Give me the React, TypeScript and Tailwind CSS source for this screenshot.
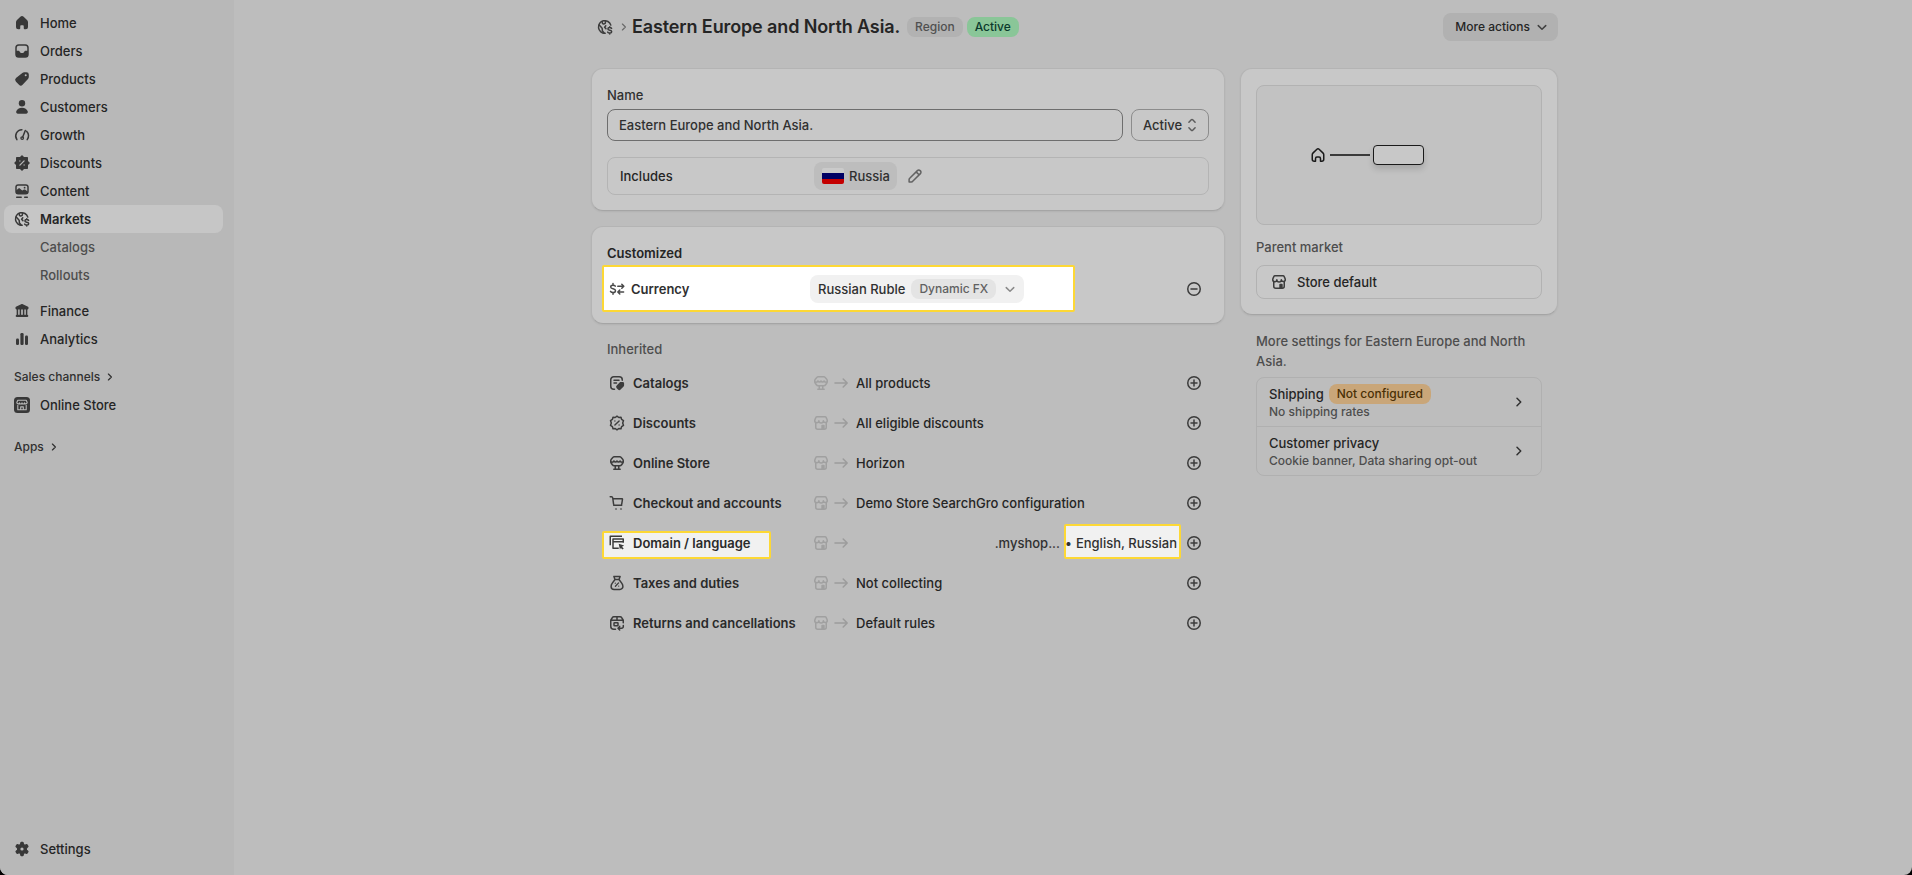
import React from 'react';

interface IconProps {
  className?: string;
  small?: boolean;
}

interface SvgProps extends IconProps {
  children: React.ReactNode;
}

const Svg: React.FC<SvgProps> = ({ className = '', small, children }) => (
  <svg
    viewBox="0 0 20 20"
    className={`${small ? 'w-4 h-4' : 'w-5 h-5'} shrink-0 ${className}`}
    fill="none"
    stroke="currentColor"
    strokeWidth={1.5}
    strokeLinecap="round"
    strokeLinejoin="round"
  >
    {children}
  </svg>
);

const HomeIcon: React.FC<IconProps> = (props) => (
  <Svg {...props}>
    <path
      fill="currentColor"
      stroke="none"
      d="M8.35 3.7a2.4 2.4 0 0 1 3.3 0l3.35 3.2c.65.6 1 1.45 1 2.3v4.5a2.5 2.5 0 0 1-2.5 2.5h-.75a1 1 0 0 1-1-1v-1.7c0-.8-.4-1.3-1-1.3h-1.5c-.6 0-1 .5-1 1.3v1.7a1 1 0 0 1-1 1H6.5A2.5 2.5 0 0 1 4 13.7V9.2c0-.85.35-1.7 1-2.3z"
    />
  </Svg>
);

const OrdersIcon: React.FC<IconProps> = (props) => (
  <Svg {...props}>
    <rect x="4" y="4" width="12" height="12" rx="2.75" />
    <path
      fill="currentColor"
      stroke="none"
      d="M4 9.75h2.6c.5 0 .8.3 1 .7l.3.6c.3.6.8.9 1.4.9h1.4c.6 0 1.1-.3 1.4-.9l.3-.6c.2-.4.5-.7 1-.7H16v3.5A2.75 2.75 0 0 1 13.25 16h-6.5A2.75 2.75 0 0 1 4 13.25z"
    />
  </Svg>
);

const ProductsIcon: React.FC<IconProps> = (props) => (
  <Svg {...props}>
    <path
      fill="currentColor"
      stroke="none"
      fillRule="evenodd"
      d="M10.3 3.9c.6-.5 1.2-.7 2-.7h2.200A2.3 2.3 0 0 1 16.8 5.5v2.3c0 .8-.3 1.5-.8 2.1l-5.4 5.8a2.5 2.5 0 0 1-3.6 0l-3-3a2.5 2.5 0 0 1 0-3.6zM13.7 7.300a1 1 0 1 0 0-2 1 1 0 0 0 0 2"
    />
  </Svg>
);

const CustomersIcon: React.FC<IconProps> = (props) => (
  <Svg {...props}>
    <g fill="currentColor" stroke="none">
      <circle cx="10" cy="6.2" r="3.2" />
      <path d="M4.2 14.6c.7-2.3 3-3.8 5.8-3.8s5.1 1.5 5.8 3.8c.3 1.2-.5 2.2-1.7 2.2H5.900c-1.2 0-2-1-1.700-2.200" />
    </g>
  </Svg>
);

const GrowthIcon: React.FC<IconProps> = (props) => (
  <Svg {...props}>
    <path d="M4.900 14.600A6.250 6.250 0 0 1 9.900 4.700M14.600 6.200a6.250 6.250 0 0 1 .6 8.400" />
    <path d="M13.300 5.500 10.700 12" />
    <circle cx="10.2" cy="13.1" r="1.3" strokeWidth={1.3} />
  </Svg>
);

const DiscountSolidIcon: React.FC<IconProps> = (props) => (
  <Svg {...props}>
    <path
      fill="currentColor"
      strokeWidth={1.6}
      d="M10 3.2l1.700 1.600h3.500v3.500L17 10l-1.800 1.700v3.500h-3.500L10 16.900l-1.700-1.700H4.800v-3.500L3.100 10l1.700-1.700V4.800h3.500z"
    />
    <path stroke="#b8b8b8" strokeWidth={1.3} d="M12.100 7.900 7.900 12.100M7.900 8v.01M12.100 12v.01" />
  </Svg>
);

const ContentIcon: React.FC<IconProps> = (props) => (
  <Svg {...props}>
    <rect x="4" y="3.9" width="12" height="8.9" rx="2.2" />
    <path
      fill="currentColor"
      stroke="none"
      d="M4 9.600l2.200-1.900c.6-.5 1.300-.5 1.900 0l1.500 1.400c.4.400 1 .400 1.500 0l.5-.4c.5-.4 1.200-.4 1.700 0L16 10.800v.5a1.700 1.700 0 0 1-1.700 1.700H5.700A1.700 1.700 0 0 1 4 11.300z"
    />
    <circle cx="12.6" cy="6.7" r=".9" fill="currentColor" stroke="none" />
    <path d="M4.700 16.300h4.500M12.700 16.300h2.600" />
  </Svg>
);

const MarketsIcon: React.FC<IconProps> = (props) => (
  <Svg {...props}>
    <path d="M10.200 16.250A6.300 6.300 0 1 1 15.800 8.100" />
    <path d="M4.200 8.100l2.300 2.400c.5.500.8.900.8 1.600v1.200c0 .8.500 1.200 1.200 1.800l.6 1" />
    <path d="M7.300 4.500v1.300c0 .8.600 1.200 1.300 1.100l.9-.1c.6 0 .9-.5.9-1V4.100" />
    <path d="M16.600 11.400c-.4-.6-1-.8-1.900-.8-1.100 0-1.800.5-1.800 1.300 0 1.900 3.800.9 3.800 2.800 0 .8-.8 1.400-1.900 1.400-1 0-1.700-.3-2.100-1M14.750 9.700v.8M14.750 16.200v.8" />
    <path d="M10.800 8.800 9.600 10.300l1.300 1.300" />
  </Svg>
);

const FinanceIcon: React.FC<IconProps> = (props) => (
  <Svg {...props}>
    <path
      fill="currentColor"
      stroke="none"
      d="M9.200 3.300c.5-.3 1.100-.3 1.600 0l4.800 2.200c.6.300 1 .8 1 1.500 0 .9-.7 1.500-1.500 1.500H4.900c-.8 0-1.500-.6-1.500-1.500 0-.7.4-1.200 1-1.500z"
    />
    <path d="M5.400 8.500v5M8.400 8.500v5M11.600 8.500v5M14.600 8.500v5" />
    <path strokeWidth={2.2} d="M4.800 14.900h10.400" />
  </Svg>
);

const AnalyticsIcon: React.FC<IconProps> = (props) => (
  <Svg {...props}>
    <g fill="currentColor" stroke="none">
      <rect x="4" y="9.5" width="3" height="6.5" rx="1.2" />
      <rect x="8.4" y="4" width="3.2" height="12" rx="1.2" />
      <rect x="13" y="6.5" width="3" height="9.5" rx="1.2" />
    </g>
  </Svg>
);

const SettingsIcon: React.FC<IconProps> = (props) => (
  <Svg {...props}>
    <path
      fill="currentColor"
      strokeWidth={1.8}
      d="M9.200 3.700h1.600l.5 2.100 1.400.8 2.100-.7.9 1.500-1.600 1.700v1.800l1.600 1.700-.9 1.500-2.100-.7-1.400.8-.5 2.100H9.200l-.5-2.100-1.400-.8-2.100.7-.9-1.500 1.600-1.700V9.100L4.300 7.400l.9-1.500 2.100.7 1.400-.8z"
    />
    <circle cx="10" cy="10" r="1.6" fill="#b8b8b8" stroke="none" />
  </Svg>
);

const OnlineStoreBadgeIcon: React.FC<IconProps> = (props) => (
  <Svg {...props}>
    <rect x="2" y="2" width="16" height="16" rx="3.5" fill="currentColor" stroke="none" />
    <g stroke="#b8b8b8" strokeWidth={1.1}>
      <path d="M5.800 5.200h8.400l1 2.300c0 1.600-2.500 1.900-2.700.2-.2 1.700-2.400 1.700-2.500 0-.1 1.700-2.300 1.700-2.500 0-.2 1.700-2.700 1.400-2.700-.2z" />
      <path d="M5.800 10.200v4.500h8.400v-4.500M8.700 14.500v-2.600h2.600v2.600" />
    </g>
  </Svg>
);

const StoreIcon: React.FC<IconProps> = (props) => (
  <Svg {...props}>
    <path d="M6 3.750h8c.5 0 .9.300 1.100.7l1 2.200c.1.200.150.400.150.600v.250a1.950 1.950 0 0 1-3.900.2 2.150 2.150 0 0 1-4.500 0 1.950 1.950 0 0 1-4.100-.2v-.25c0-.2.050-.4.150-.6l1-2.200c.2-.4.6-.7 1.100-.7z" />
    <path d="M4.750 9.800v4.450a2 2 0 0 0 2 2h6.500a2 2 0 0 0 2-2V9.800" />
    <path fill="currentColor" stroke="none" d="M10.300 12.600c0-.5.400-.9.900-.9h1.600c.5 0 .9.400.9.900v3.600h-3.400z" />
  </Svg>
);

const ThemeIcon: React.FC<IconProps> = (props) => (
  <Svg {...props}>
    <path d="M7.300 3.750h5.400c.5 0 1 .2 1.300.6l1.700 1.800c.350.4.55.9.55 1.400v1.300c0 .4-.1.8-.4 1.200l-1.400 1.900c-.3.500-.9.800-1.500.8h-5.900c-.6 0-1.200-.3-1.500-.8l-1.400-1.900c-.3-.4-.4-.8-.4-1.200v-1.300c0-.5.2-1 .55-1.400L6 4.350c.3-.4.8-.6 1.300-.6z" />
    <path d="M4 8.900c1 .6 2.200.3 2.900-.9.900 1.200 2.200 1.200 3.100 0 .9 1.200 2.200 1.200 3.100 0 .7 1.200 1.900 1.500 2.900.9" />
    <path d="M8.250 13v3M11.750 13v3M6.800 16.250h6.400" />
  </Svg>
);

const CatalogIcon: React.FC<IconProps> = (props) => (
  <Svg {...props}>
    <path d="M7.500 16.250h-.75a3 3 0 0 1-3-3v-6.500a3 3 0 0 1 3-3h5.500a3 3 0 0 1 3 3v.5M7 7.250h5M7 10h2.500" />
    <path
      fill="currentColor"
      stroke="none"
      d="M12.600 9.500c.4-.35.8-.5 1.300-.5h1.800c.8 0 1.400.6 1.400 1.400v1.800c0 .5-.2 1-.5 1.300l-3 3a1.800 1.800 0 0 1-2.600 0l-1.300-1.300a1.800 1.800 0 0 1 0-2.600z"
    />
  </Svg>
);

const DiscountIcon: React.FC<IconProps> = (props) => (
  <Svg {...props}>
    <path d="M10 3.200l1.800 1.300 2.200-.2.600 2.100 1.900 1.200-.8 2.400.8 2.400-1.900 1.200-.6 2.100-2.200-.2L10 16.800l-1.800-1.300-2.200.2-.6-2.100-1.900-1.200.8-2.400-.8-2.400 1.900-1.200.6-2.100 2.200.2z" />
    <path strokeWidth={1.4} d="M12.100 7.900 7.900 12.100M7.900 8v.01M12.100 12v.01" />
  </Svg>
);

const CartIcon: React.FC<IconProps> = (props) => (
  <Svg {...props}>
    <path d="M3.200 3.750h1.300c.6 0 1.100.4 1.200 1l.9 6.500c.1.600.6 1 1.200 1h5.700c.6 0 1.100-.4 1.200-1l.8-5c0-.3-.2-.5-.5-.5H6M6.700 12.250h8" />
    <g fill="currentColor" stroke="none" opacity=".6">
      <circle cx="9" cy="16" r="1.1" />
      <circle cx="14" cy="16" r="1.1" />
    </g>
  </Svg>
);

const DomainIcon: React.FC<IconProps> = (props) => (
  <Svg {...props}>
    <path strokeLinecap="square" d="M3.250 11.500V3.250h11M16.250 9V6H6v9.250h5M6 8.750h10" />
    <path fill="currentColor" stroke="none" d="M11.700 10.700l5.400 1.900-2.100 1.100 1.700 1.800-1.100 1.100-1.800-1.700-.9 1.700z" />
  </Svg>
);

const TaxIcon: React.FC<IconProps> = (props) => (
  <Svg {...props}>
    <path d="M8 6.500h4l2.700 3.600c.9 1.200 1.200 2.200 1.200 3.300a3 3 0 0 1-3 3H7.100a3 3 0 0 1-3-3c0-1.100.3-2.100 1.200-3.300zM8 6.500 6.900 3.500h6.200L12 6.500" />
    <path strokeWidth={1.3} d="M11.600 9.900l-3.200 3.400M8.300 10.200v.01M11.700 13.100v.01" />
  </Svg>
);

const ReturnsIcon: React.FC<IconProps> = (props) => (
  <Svg {...props}>
    <path d="M8.500 16.250H6.750a3 3 0 0 1-3-3v-6l1.600-2.700c.3-.5.8-.8 1.400-.8h6.500c.6 0 1.100.3 1.400.8l1.600 2.700v2.500M3.900 7.250h12.200M10 4v3" />
    <rect x="7" y="9.800" width="4" height="3" rx=".5" />
    <path d="M16.300 12.600v1a1.600 1.600 0 0 1-1.600 1.600h-3.500M12.700 13.400l-1.700 1.800 1.700 1.800" />
  </Svg>
);

const CurrencyIcon: React.FC<IconProps> = (props) => (
  <Svg {...props}>
    <path d="M8.300 7.200C7.900 6.500 7.100 6.200 6 6.200c-1.400 0-2.300.6-2.300 1.700 0 2.500 4.800 1.300 4.800 3.900 0 1.100-1 1.800-2.400 1.800-1.300 0-2.200-.4-2.600-1.200M6 4.500v1.500M6 13.800v1.500" />
    <path d="M10.800 7.200h5.500M14.800 5.200l2 2-2 2M16.600 13h-5.500M12.800 11l-2 2 2 2" />
  </Svg>
);

const ArrowRightIcon: React.FC<IconProps> = (props) => (
  <Svg {...props}>
    <path d="M4 10h12M12.200 6l4 4-4 4" />
  </Svg>
);

const PlusCircleIcon: React.FC<IconProps> = (props) => (
  <Svg {...props}>
    <circle cx="10" cy="10" r="6.25" />
    <path d="M10 7v6M7 10h6" />
  </Svg>
);

const MinusCircleIcon: React.FC<IconProps> = (props) => (
  <Svg {...props}>
    <circle cx="10" cy="10" r="6.25" />
    <path d="M7 10h6" />
  </Svg>
);

const PencilIcon: React.FC<IconProps> = (props) => (
  <Svg {...props}>
    <path d="M4.100 13.600c0-.5.200-1 .6-1.300l7.700-7.700a1.900 1.900 0 0 1 2.700 0l.3.3a1.900 1.900 0 0 1 0 2.700l-7.700 7.700c-.3.400-.8.600-1.300.6H4.100zM11.400 6.100l2.600 2.600" />
  </Svg>
);

const ChevronDownIcon: React.FC<IconProps> = (props) => (
  <Svg {...props}>
    <path d="M6.250 8.600 10 12.250l3.750-3.650" />
  </Svg>
);

const ChevronRightIcon: React.FC<IconProps> = (props) => (
  <Svg {...props}>
    <path d="M8 6.300 11.750 10 8 13.700" />
  </Svg>
);

const SelectIcon: React.FC<IconProps> = (props) => (
  <Svg {...props}>
    <path d="M6.900 7.300l2.400-2.500c.4-.4 1-.4 1.400 0l2.400 2.500M6.900 12.700l2.400 2.500c.4.400 1 .4 1.400 0l2.400-2.500" />
  </Svg>
);

const HouseOutlineIcon: React.FC<IconProps> = (props) => (
  <Svg {...props}>
    <path d="M8.900 4.200c.6-.6 1.600-.6 2.200 0l4 3.900c.4.400.65 1 .65 1.600v4.550a2 2 0 0 1-2 2h-1.250v-2.500c0-1-.6-1.700-1.500-1.700h-2c-.9 0-1.500.7-1.500 1.700v2.500H6.250a2 2 0 0 1-2-2V9.700c0-.6.250-1.200.650-1.600z" />
  </Svg>
);

const navItems = [
  { label: 'Home', icon: HomeIcon },
  { label: 'Orders', icon: OrdersIcon },
  { label: 'Products', icon: ProductsIcon },
  { label: 'Customers', icon: CustomersIcon },
  { label: 'Growth', icon: GrowthIcon },
  { label: 'Discounts', icon: DiscountSolidIcon },
  { label: 'Content', icon: ContentIcon },
  { label: 'Markets', icon: MarketsIcon, active: true }
];

const inheritedItems = [
  { label: 'Catalogs', icon: CatalogIcon, source: ThemeIcon, value: 'All products' },
  { label: 'Discounts', icon: DiscountIcon, source: StoreIcon, value: 'All eligible discounts' },
  { label: 'Online Store', icon: ThemeIcon, source: StoreIcon, value: 'Horizon' },
  { label: 'Checkout and accounts', icon: CartIcon, source: StoreIcon, value: 'Demo Store SearchGro configuration' },
  { label: 'Domain / language', icon: DomainIcon, source: StoreIcon, value: '', highlighted: true },
  { label: 'Taxes and duties', icon: TaxIcon, source: StoreIcon, value: 'Not collecting' },
  { label: 'Returns and cancellations', icon: ReturnsIcon, source: StoreIcon, value: 'Default rules' }
];

const moreSettings = [
  { title: 'Shipping', badge: 'Not configured', detail: 'No shipping rates' },
  { title: 'Customer privacy', badge: '', detail: 'Cookie banner, Data sharing opt-out' }
];

interface NavItemProps {
  label: string;
  icon: React.FC<IconProps>;
  active?: boolean;
}

const NavItem: React.FC<NavItemProps> = ({ label, icon: Icon, active }) => (
  <a
    className={`flex items-center gap-2 h-7 pl-2 rounded-lg text-[#252525] ${
      active ? 'bg-[#c6c6c6] font-semibold' : 'font-medium'
    }`}
  >
    <Icon className="text-[#383838]" />
    {label}
  </a>
);

const Sidebar: React.FC = () => (
  <nav className="w-[234px] shrink-0 flex flex-col bg-[#b8b8b8] pl-1 pr-[11px] pt-[9px] pb-3">
    {navItems.map(item => (
      <NavItem key={item.label} {...item} />
    ))}
    <a className="flex items-center h-7 pl-9 text-[#4d4d4d]">Catalogs</a>
    <a className="flex items-center h-7 pl-9 text-[#4d4d4d]">Rollouts</a>
    <div className="mt-2">
      <NavItem label="Finance" icon={FinanceIcon} />
      <NavItem label="Analytics" icon={AnalyticsIcon} />
    </div>
    <div className="mt-2.5 flex items-center h-7 pl-2.5 text-xs font-medium text-[#303030]">
      Sales channels
      <ChevronRightIcon small className="ml-0.5" />
    </div>
    <NavItem label="Online Store" icon={OnlineStoreBadgeIcon} />
    <div className="mt-3.5 flex items-center h-7 pl-2.5 text-xs font-medium text-[#303030]">
      Apps
      <ChevronRightIcon small className="ml-0.5" />
    </div>
    <div className="mt-auto">
      <NavItem label="Settings" icon={SettingsIcon} />
    </div>
  </nav>
);

const cardClass = 'bg-[#c8c8c8] rounded-xl border border-[#b4b4b4] border-b-[#a5a5a5] shadow-[0_1px_2px_rgba(0,0,0,0.06)]';

const MarketHeader: React.FC = () => (
  <header className="flex items-center h-7">
    <MarketsIcon className="ml-1 text-[#3c3c3c]" />
    <ChevronRightIcon small className="ml-px text-[#6a6a6a]" />
    <h1 className="text-lg leading-7 font-semibold tracking-[-0.12px] text-[#252525]">Eastern Europe and North Asia.</h1>
    <span className="ml-[7px] h-5 px-2 flex items-center rounded-lg bg-[#b2b2b2] text-xs font-[550] text-[#505050]">Region</span>
    <span className="ml-1 h-5 px-2 flex items-center rounded-lg bg-[#8ac698] text-xs font-[550] text-[#0a3a2c]">Active</span>
    <button className="ml-auto h-7 pl-3 pr-1.5 flex items-center rounded-lg bg-[#b1b1b1] text-xs font-[550] text-[#252525]">
      More actions
      <ChevronDownIcon className="ml-0.5 text-[#404040]" />
    </button>
  </header>
);

const NameCard: React.FC = () => (
  <section className={`${cardClass} h-[143px] p-[15px]`}>
    <label className="block mt-px h-5 text-[#303030]">Name</label>
    <div className="mt-1 flex gap-2">
      <div className="flex-1 flex items-center h-8 px-[11px] rounded-lg border border-[#6e6e6e] text-[#303030]">
        Eastern Europe and North Asia.
      </div>
      <div className="w-[78px] flex items-center h-8 pl-[11px] rounded-lg border border-[#8c8c8c] text-[#303030]">
        Active
        <SelectIcon className="text-[#5c5c5c]" />
      </div>
    </div>
    <div className="mt-4 flex items-center h-[38px] pl-3 rounded-lg border border-[#b4b4b4]">
      <span className="w-[194px] font-medium text-[#252525]">Includes</span>
      <span className="flex items-center gap-[5px] h-7 pl-2 pr-[7px] rounded-lg bg-[#bdbdbd] text-[#303030]">
        <span className="flex flex-col w-[22px] h-4 rounded-xs overflow-hidden">
          <span className="flex-1 bg-[#cacaca]"></span>
          <span className="flex-1 bg-[#000064]"></span>
          <span className="flex-1 bg-[#c40000]"></span>
        </span>
        Russia
      </span>
      <PencilIcon className="ml-2 text-[#636363]" />
    </div>
  </section>
);

const CustomizedCard: React.FC = () => (
  <section className={`${cardClass} mt-[15px] h-[98px] p-[15px]`}>
    <h2 className="mt-px h-5 font-semibold text-[#252525]">Customized</h2>
    <div className="relative mt-1.5 flex items-center h-10">
      <div className="absolute -left-[5px] -top-1 w-[473px] h-[47px] bg-white border-2 border-[#fdd835] rounded-xs"></div>
      <div className="relative flex items-center w-[203px]">
        <CurrencyIcon className="text-[#4a4a4a]" />
        <span className="ml-1 font-semibold text-[#303030]">Currency</span>
      </div>
      <div className="relative flex items-center h-7 pl-2 pr-1 rounded-lg bg-[#f1f1f1] text-[#303030]">
        Russian Ruble
        <span className="ml-1.5 h-5 px-2 flex items-center rounded-lg bg-[#e4e4e4] font-[550] text-xs text-[#616161]">Dynamic FX</span>
        <ChevronDownIcon className="ml-1 text-[#8a8a8a]" />
      </div>
      <MinusCircleIcon className="ml-auto mr-[5px] text-[#3c3c3c]" />
    </div>
  </section>
);

const InheritedList: React.FC = () => (
  <section className="mt-[15px] px-4">
    <h2 className="h-5 text-[#4d4d4d]">Inherited</h2>
    <div className="mt-1">
      {inheritedItems.map(item => (
        <div key={item.label} className="relative flex items-center h-10">
          {item.highlighted && (
            <>
              <div className="absolute -left-[5px] top-2 w-[169px] h-7 bg-[#f1f1f1] border-2 border-[#fdd835] rounded-xs"></div>
              <div className="absolute right-7 top-px w-[117px] h-[35px] bg-[#f1f1f1] border-2 border-[#fdd835] rounded-xs"></div>
            </>
          )}
          <div className="relative flex items-center gap-1.5 w-[204px]">
            <item.icon className="text-[#3c3c3c]" />
            <span className="font-semibold text-[#2a2a2a] whitespace-nowrap">{item.label}</span>
          </div>
          <item.source className="text-[#a0a0a0]" />
          <ArrowRightIcon className="text-[#9c9c9c]" />
          {item.highlighted ? (
            <div className="relative ml-auto flex text-[#303030]">
              <span>.myshop...</span>
              <span className="ml-[5px]">•</span>
              <span className="ml-1 mr-[7px]">English, Russian</span>
            </div>
          ) : (
            <span className="ml-[5px] mr-auto text-[#252525]">{item.value}</span>
          )}
          <PlusCircleIcon className="mr-[5px] text-[#3c3c3c]" />
        </div>
      ))}
    </div>
  </section>
);

const ParentMarketCard: React.FC = () => (
  <section className={`${cardClass} h-[247px] p-[15px]`}>
    <div className="mt-px flex items-center h-[140px] pl-[51px] rounded-lg border border-[#b2b2b2] bg-[#c2c2c2]">
      <HouseOutlineIcon className="text-[#1a1a1a]" />
      <div className="ml-0.5 w-10 h-0.5 bg-[#3a3a3a]"></div>
      <div className="ml-[3px] w-[51px] h-5 rounded-sm border border-[#1a1a1a] bg-[#c8c8c8] shadow-[0_4px_6px_rgba(0,0,0,0.14)]"></div>
    </div>
    <h2 className="mt-3 h-5 text-[#4d4d4d]">Parent market</h2>
    <div className="mt-2 flex items-center gap-2 h-[34px] pl-3 rounded-lg border border-[#b2b2b2] text-[#252525]">
      <StoreIcon className="text-[#3c3c3c]" />
      Store default
    </div>
  </section>
);

const MoreSettings: React.FC = () => (
  <section className="mt-4 px-4">
    <p className="text-[#4d4d4d]">More settings for Eastern Europe and North Asia.</p>
    <div className="mt-1.5 rounded-lg border border-[#b0b0b0] divide-y divide-[#b0b0b0]">
      {moreSettings.map(item => (
        <div key={item.title} className="flex items-center h-[49px] last:h-12 px-3">
          <div className="flex-1 pt-px">
            <div className="flex items-center gap-[5px] h-[18px] text-[#252525]">
              {item.title}
              {item.badge && (
                <span className="h-5 px-2 flex items-center rounded-lg bg-[#c9a679] text-xs font-[550] text-[#4a3005]">
                  {item.badge}
                </span>
              )}
            </div>
            <div className="mt-px h-4 leading-4 text-xs text-[#4d4d4d]">{item.detail}</div>
          </div>
          <ChevronRightIcon className="text-[#303030]" />
        </div>
      ))}
    </div>
  </section>
);

export default function App() {
  return (
    <div className="h-[875px] w-full bg-black">
      <div
        className="flex h-full w-full overflow-hidden rounded-b-lg bg-[#bdbdbd] text-[13px] leading-5 font-[450]"
        style={{ fontFamily: 'Inter, "Liberation Sans", sans-serif' }}
      >
        <Sidebar />
        <main className="flex-1 flex justify-center">
          <div className="w-[967px] ml-[3px] pt-[13px]">
            <MarketHeader />
            <div className="mt-[27px] flex items-start gap-[15px]">
              <div className="w-[634px]">
                <NameCard />
                <CustomizedCard />
                <InheritedList />
              </div>
              <div className="w-[318px]">
                <ParentMarketCard />
                <MoreSettings />
              </div>
            </div>
          </div>
        </main>
      </div>
    </div>
  );
}
